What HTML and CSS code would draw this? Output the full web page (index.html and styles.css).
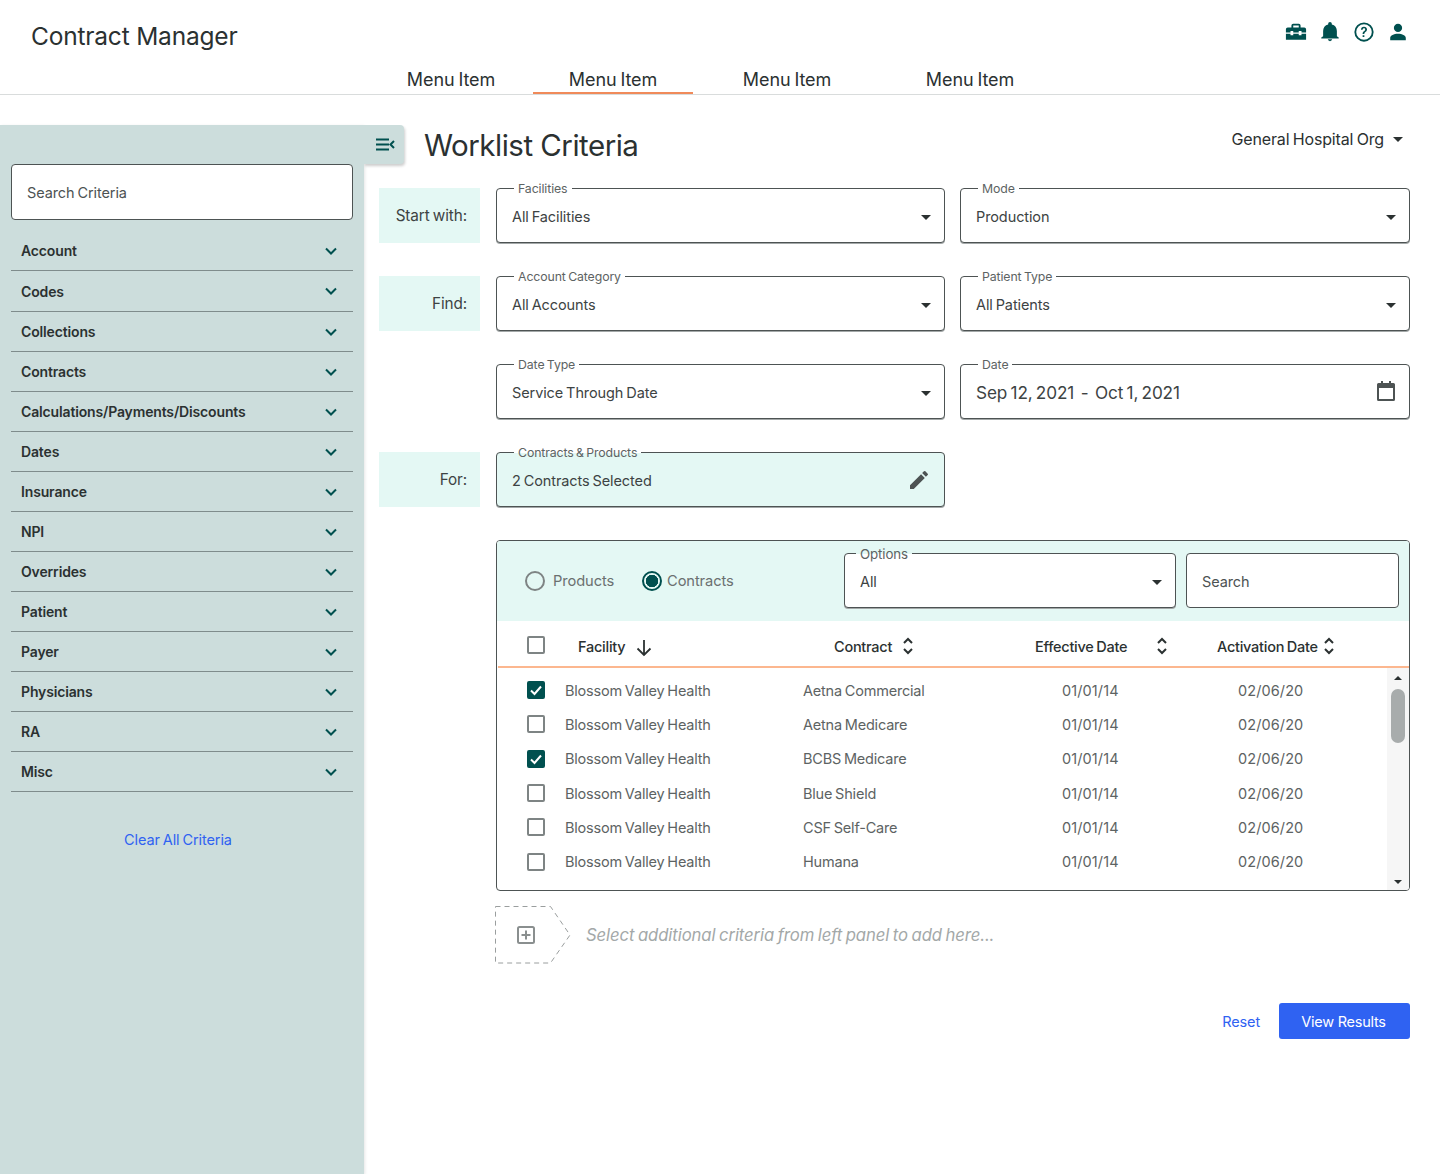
FILE: index.html
```html
<!DOCTYPE html>
<html lang="en">
<head>
<meta charset="utf-8">
<title>Contract Manager</title>
<link rel="stylesheet" href="styles.css">
</head>
<body>
<header class="topbar">
  <div class="topbar-row">
    <div class="brand">Contract Manager</div>
    <div class="top-icons">
      <svg class="ticon" viewBox="0 0 24 24"><path d="M9 3h6a2 2 0 0 1 2 2v2h4a2 2 0 0 1 2 2v3.500h-5V11h-3v1.500H9V11H6v1.500H1V9a2 2 0 0 1 2-2h4V5a2 2 0 0 1 2-2zm0 2v2h6V5H9zM1 14h5v1.500h3V14h6v1.500h3V14h5v6.500H1V14z"/></svg>
      <svg class="ticon" viewBox="0 0 24 24"><path d="M12 22a2.500 2.500 0 0 0 2.400-2h-4.800A2.500 2.500 0 0 0 12 22zm7.500-5.500V11c0-3.500-2-6.300-5.500-7.100V3a2 2 0 0 0-4 0v.9C6.500 4.700 4.500 7.500 4.500 11v5.500L2.500 18v1h19v-1l-2-1.500z"/></svg>
      <svg class="ticon" viewBox="0 0 24 24"><circle cx="12" cy="12" r="9.500" fill="none" stroke="#00504f" stroke-width="2"/><path d="M8.700 9.500A3.300 3.300 0 0 1 12 6.300c1.900 0 3.300 1.300 3.300 3 0 2.500-2.900 2.600-2.900 5h-1.900c0-3.300 2.800-3.200 2.800-5 0-.8-.6-1.300-1.300-1.300s-1.400.6-1.500 1.500H8.700zM10.500 15.500h1.900v2h-1.900z"/></svg>
      <svg class="ticon" viewBox="0 0 24 24"><path d="M12 3a4.500 4.500 0 1 1 0 9 4.500 4.500 0 0 1 0-9zm0 11c4.500 0 8.500 2 8.500 4.500V21h-17v-2.500C3.500 16 7.500 14 12 14z"/></svg>
    </div>
  </div>
  <nav class="menu">
    <a class="menu-item m1">Menu Item</a>
    <a class="menu-item m2 active">Menu Item</a>
    <a class="menu-item m3">Menu Item</a>
    <a class="menu-item m4">Menu Item</a>
  </nav>
</header>

<div class="layout">
  <aside class="sidebar">
    <button class="collapse" aria-label="Collapse">
      <svg width="19" height="13" viewBox="0 0 19 13"><path d="M0 1.500h13M0 6.500h13M0 11.500h13" stroke="#00504f" stroke-width="2" fill="none"/><path d="M18 3 14.500 6.500 18 10" stroke="#00504f" stroke-width="2" fill="none"/></svg>
    </button>
    <div class="side-search">Search Criteria</div>
    <ul class="acc">
      <li>Account<svg class="chev" viewBox="0 0 12 8"><path d="M1 1.500 6 6.500l5-5"/></svg></li>
      <li>Codes<svg class="chev" viewBox="0 0 12 8"><path d="M1 1.500 6 6.500l5-5"/></svg></li>
      <li>Collections<svg class="chev" viewBox="0 0 12 8"><path d="M1 1.500 6 6.500l5-5"/></svg></li>
      <li>Contracts<svg class="chev" viewBox="0 0 12 8"><path d="M1 1.500 6 6.500l5-5"/></svg></li>
      <li>Calculations/Payments/Discounts<svg class="chev" viewBox="0 0 12 8"><path d="M1 1.500 6 6.500l5-5"/></svg></li>
      <li>Dates<svg class="chev" viewBox="0 0 12 8"><path d="M1 1.500 6 6.500l5-5"/></svg></li>
      <li>Insurance<svg class="chev" viewBox="0 0 12 8"><path d="M1 1.500 6 6.500l5-5"/></svg></li>
      <li>NPI<svg class="chev" viewBox="0 0 12 8"><path d="M1 1.500 6 6.500l5-5"/></svg></li>
      <li>Overrides<svg class="chev" viewBox="0 0 12 8"><path d="M1 1.500 6 6.500l5-5"/></svg></li>
      <li>Patient<svg class="chev" viewBox="0 0 12 8"><path d="M1 1.500 6 6.500l5-5"/></svg></li>
      <li>Payer<svg class="chev" viewBox="0 0 12 8"><path d="M1 1.500 6 6.500l5-5"/></svg></li>
      <li>Physicians<svg class="chev" viewBox="0 0 12 8"><path d="M1 1.500 6 6.500l5-5"/></svg></li>
      <li>RA<svg class="chev" viewBox="0 0 12 8"><path d="M1 1.500 6 6.500l5-5"/></svg></li>
      <li>Misc<svg class="chev" viewBox="0 0 12 8"><path d="M1 1.500 6 6.500l5-5"/></svg></li>
    </ul>
    <a class="clear">Clear All Criteria</a>
  </aside>

  <main class="main">
    <div class="title-row">
      <h1>Worklist Criteria</h1>
      <div class="org">General Hospital Org<span class="caret"></span></div>
    </div>

    <div class="form-grid">
      <div class="tag">Start with:</div>
      <div class="field"><span class="legend">Facilities</span><span class="val">All Facilities</span><span class="caret"></span></div>
      <div class="field"><span class="legend">Mode</span><span class="val">Production</span><span class="caret"></span></div>

      <div class="tag">Find:</div>
      <div class="field"><span class="legend">Account Category</span><span class="val">All Accounts</span><span class="caret"></span></div>
      <div class="field"><span class="legend">Patient Type</span><span class="val">All Patients</span><span class="caret"></span></div>

      <div></div>
      <div class="field"><span class="legend">Date Type</span><span class="val">Service Through Date</span><span class="caret"></span></div>
      <div class="field"><span class="legend">Date</span><span class="val date">Sep 12, 2021&nbsp; - &nbsp;Oct 1, 2021</span>
        <svg class="cal" viewBox="0 0 18 20"><path d="M4 0h2v2h6V0h2v2h2.500A1.500 1.500 0 0 1 18 3.500v15a1.500 1.500 0 0 1-1.500 1.500h-15A1.500 1.500 0 0 1 0 18.500v-15A1.500 1.500 0 0 1 1.500 2H4V0zM2 7v11h14V7H2z"/></svg>
      </div>

      <div class="tag">For:</div>
      <div class="field mint"><span class="legend">Contracts &amp; Products</span><span class="val">2 Contracts Selected</span>
        <svg class="pencil" viewBox="0 0 24 24"><path d="M3 17.250V21h3.750L17.810 9.940l-3.750-3.750L3 17.250zM20.710 7.040a1 1 0 0 0 0-1.410l-2.340-2.340a1 1 0 0 0-1.410 0l-1.830 1.830 3.750 3.750 1.830-1.830z"/></svg>
      </div>
      <div></div>
    </div>

    <section class="panel">
      <div class="panel-head">
        <label class="radio">Products</label>
        <label class="radio on">Contracts</label>
        <div class="field options"><span class="legend">Options</span><span class="val">All</span><span class="caret"></span></div>
        <div class="panel-search">Search</div>
      </div>
      <div class="thead">
        <span class="check"></span>
        <span class="th th-fac">Facility<svg class="arrow" viewBox="0 0 16 18"><path d="M8 1v15M1.500 9.500 8 16l6.500-6.500"/></svg></span>
        <span class="th th-con">Contract<svg class="sort" viewBox="0 0 10 18"><path d="M1 6l4-4 4 4M1 12l4 4 4-4"/></svg></span>
        <span class="th th-eff">Effective Date<svg class="sort" viewBox="0 0 10 18"><path d="M1 6l4-4 4 4M1 12l4 4 4-4"/></svg></span>
        <span class="th th-act">Activation Date<svg class="sort" viewBox="0 0 10 18"><path d="M1 6l4-4 4 4M1 12l4 4 4-4"/></svg></span>
      </div>
      <div class="tbody">
        <div class="rows">
          <div class="row"><span class="check on"><svg viewBox="0 0 18 18"><path d="M4 9.500 7.500 13 14 5.500"/></svg></span><span>Blossom Valley Health</span><span>Aetna Commercial</span><span>01/01/14</span><span>02/06/20</span></div>
          <div class="row"><span class="check"></span><span>Blossom Valley Health</span><span>Aetna Medicare</span><span>01/01/14</span><span>02/06/20</span></div>
          <div class="row"><span class="check on"><svg viewBox="0 0 18 18"><path d="M4 9.500 7.500 13 14 5.500"/></svg></span><span>Blossom Valley Health</span><span>BCBS Medicare</span><span>01/01/14</span><span>02/06/20</span></div>
          <div class="row"><span class="check"></span><span>Blossom Valley Health</span><span>Blue Shield</span><span>01/01/14</span><span>02/06/20</span></div>
          <div class="row"><span class="check"></span><span>Blossom Valley Health</span><span>CSF Self-Care</span><span>01/01/14</span><span>02/06/20</span></div>
          <div class="row"><span class="check"></span><span>Blossom Valley Health</span><span>Humana</span><span>01/01/14</span><span>02/06/20</span></div>
        </div>
        <div class="scrollbar">
          <span class="sb-up"></span>
          <span class="sb-thumb"></span>
          <span class="sb-down"></span>
        </div>
      </div>
    </section>

    <div class="add-row">
      <div class="add-shape">
        <svg class="add-outline" width="76" height="58" viewBox="0 0 76 58"><path d="M.5 .5h55L75 29 55.500 57H.5z" fill="none" stroke="#9a9e9e" stroke-width="1" stroke-dasharray="5 4"/></svg>
        <svg class="add-plus" width="18" height="18" viewBox="0 0 18 18"><rect x="1" y="1" width="16" height="16" rx="1.500" fill="none" stroke="#8a8f8f" stroke-width="2"/><path d="M9 4.500v9M4.500 9h9" stroke="#8a8f8f" stroke-width="2"/></svg>
      </div>
      <span class="add-text">Select additional criteria from left panel to add here...</span>
    </div>

    <div class="actions">
      <a class="reset">Reset</a>
      <button class="primary">View Results</button>
    </div>
  </main>
</div>
</body>
</html>
```

FILE: styles.css
```css
*, *::before, *::after { box-sizing: border-box; }
html, body { margin: 0; padding: 0; }
body {
  width: 1440px;
  height: 1174px;
  overflow: hidden;
  background: #fff;
  font-family: "Inter", "Liberation Sans", sans-serif;
  color: #3d4343;
  font-size: 14px;
  letter-spacing: -0.1px;
  word-spacing: -1px;
}

/* header */
.topbar { height: 95px; border-bottom: 1px solid #d9dcdc; position: relative; }
.topbar-row { display: flex; justify-content: space-between; padding: 20px 31px 0 31px; }
.brand { font-size: 24.500px; line-height: 32px; color: #2b3131; letter-spacing: -0.2px; word-spacing: 0; }
.top-icons { display: flex; gap: 12px; padding-top: 1px; }
.ticon { width: 22px; height: 22px; fill: #00504f; }
.menu { display: flex; position: absolute; left: 0; top: 64px; height: 30px; }
.menu-item { font-size: 18px; line-height: 32px; color: #2b3131; text-align: center; word-spacing: -1px; }
.m1 { margin-left: 369px; width: 164px; }
.m2 { width: 160px; }
.m3 { width: 188px; }
.m4 { margin-left: 4px; width: 170px; }
.active { border-bottom: 2px solid #f08a5a; height: 30px; }

.layout { display: flex; height: 1079px; padding-top: 30px; }

/* sidebar */
.sidebar {
  width: 364px;
  flex: none;
  background: #ccdddc;
  padding: 39px 11px 0;
  position: relative;
  box-shadow: 1px 1px 3px rgba(0,0,0,.1);
}
.collapse {
  position: absolute; left: 364px; top: 0;
  width: 40px; height: 39px;
  background: #ccdddc; border: 0; border-radius: 0 4px 4px 0;
  box-shadow: 1px 2px 3px rgba(0,0,0,.2);
  clip-path: inset(0 -6px -6px 0);
  padding: 0 0 0 12px;
  display: flex; align-items: center;
}
.collapse svg { display: block; }
.side-search {
  height: 56px; background: #fff; border: 1px solid #4d5353; border-radius: 4px;
  padding-left: 15px; line-height: 56px; color: #4d5353; font-size: 14.500px;
}
.acc { list-style: none; margin: 11px 0 0; padding: 0; }
.acc li {
  height: 40px; border-bottom: 1px solid #7f8c8c;
  display: flex; align-items: center; justify-content: space-between;
  padding: 0 16px 0 10px;
  font-weight: 600; font-size: 14px; color: #2b3131; letter-spacing: -0.15px;
}
.acc li:nth-child(2) { height: 41px; }
.chev { width: 12px; height: 8px; fill: none; stroke: #00504f; stroke-width: 2; }
.clear { display: block; margin-top: 39px; margin-left: 113px; color: #2f62f2; font-size: 14.500px; line-height: 18px; }

/* main */
.main { flex: 1; padding: 0 30px 0 15px; position: relative; }
.title-row { display: flex; justify-content: space-between; padding-left: 45px; height: 63px; }
h1 { margin: 0; font-size: 29.500px; font-weight: 400; line-height: 40px; color: #2b3131; letter-spacing: -0.5px; word-spacing: 0; }
.org { display: flex; align-items: center; height: 28px; font-size: 16px; color: #2b3131; padding-right: 7px; letter-spacing: -0.15px; }
.org .caret { margin-left: 9px; position: static; display: block; }

.caret { width: 0; height: 0; border-left: 5px solid transparent; border-right: 5px solid transparent; border-top: 5px solid #2b3131; position: absolute; right: 13px; top: 26px; }

.form-grid { display: grid; grid-template-columns: 117px 464px 450px; row-gap: 33px; grid-auto-rows: 55px; }
.tag { width: 101px; background: #e4f8f4; display: flex; align-items: center; justify-content: flex-end; padding: 0 13px 0 0; font-size: 15.300px; color: #3d4343; }
.field {
  position: relative; border: 1px solid #4d5353; border-radius: 4px; background: #fff;
  display: flex; align-items: center; padding: 1px 15px 0;
  box-shadow: 0 1px 0 #a3a8a8;
  font-size: 14.500px;
}
.form-grid > .field:nth-child(3n+2) { width: 449px; }
.mint { background: #e4f8f4; }
.legend {
  position: absolute; left: 17px; top: -7px; background: #fff;
  padding: 0 4px; font-size: 12.300px; line-height: 14px; color: #5d6363;
}
.mint .legend { background: linear-gradient(#fff 50%, #e4f8f4 50%); }
.val { color: #3d4343; }
.date { font-size: 17.200px; word-spacing: -1.500px; }
.cal { position: absolute; right: 14px; top: 16px; width: 18px; height: 20px; fill: #4d5353; }
.pencil { position: absolute; right: 13px; top: 15px; width: 24px; height: 24px; fill: #4d5353; }

/* panel */
.panel {
  margin: 33px 0 0 117px; width: 914px; height: 351px;
  border: 1px solid #4d5353; border-radius: 4px; overflow: hidden;
  position: relative;
}
.panel-head {
  height: 80px; background: #e4f8f4;
  display: flex; align-items: center; padding: 0 10px 0 28px;
}
.radio { display: flex; align-items: center; gap: 8px; color: #6b7070; font-size: 14.700px; }
.radio::before { content: ""; width: 20px; height: 20px; border: 2px solid #7e8484; border-radius: 50%; background: transparent; flex: none; }
.radio:first-child { width: 117px; }
.radio.on { width: 202px; gap: 5px; }
.radio.on::before { border-color: #00504f; background: radial-gradient(circle, #00504f 0 6px, transparent 6.500px); }
.options { width: 332px; height: 55px; margin: -1px 10px 0 0; flex: none; }
.options .legend { left: 11px; background: linear-gradient(#e4f8f4 50%, #fff 50%); font-size: 13.300px; }
.panel-search {
  width: 213px; height: 55px; margin-top: -1px; background: #fff; border: 1px solid #4d5353; border-radius: 4px;
  padding-left: 15px; line-height: 55px; font-size: 14.500px; color: #4d5353; flex: none;
}
.thead { height: 47px; border-bottom: 2px solid #fcb78f; position: relative; display: flex; align-items: center; padding: 3px 0 0 29px; margin-left: 1px; }
.th { display: flex; align-items: center; font-weight: 500; color: #2b3131; font-size: 14.500px; letter-spacing: -0.25px; position: absolute; top: 15px; height: 20px; }
.th-fac { left: 80px; }
.th-con { left: 336px; }
.th-eff { left: 537px; }
.th-act { left: 719px; }
.arrow { width: 16px; height: 18px; margin-left: 11px; margin-top: 3px; fill: none; stroke: #2b3131; stroke-width: 1.800; }
.sort { width: 10px; height: 18px; margin-left: 11px; fill: none; stroke: #2b3131; stroke-width: 2; }
.th-eff .sort { margin-left: 30px; }
.th-act .sort { margin-left: 6px; }
.check { width: 18px; height: 18px; border: 2px solid #7e8484; border-radius: 2px; display: block; flex: none; background: #fff; }
.check.on { background: #00504f; border-color: #00504f; }
.check svg { display: block; width: 18px; height: 18px; margin: -2px; fill: none; stroke: #fff; stroke-width: 2; }
.tbody { display: flex; height: 222px; }
.rows { flex: 1; padding-top: 5px; }
.row {
  display: grid; grid-template-columns: 38px 238px 259px 176px 1fr;
  height: 34.300px; align-items: center; padding-left: 30px; color: #5d6363; font-size: 14.500px; letter-spacing: -0.2px;
}
.row > span:nth-child(n+4) { letter-spacing: 0.1px; }
.scrollbar { width: 22px; background: #f6f6f6; position: relative; flex: none; }
.sb-thumb { position: absolute; left: 4px; top: 21px; width: 14px; height: 54px; border-radius: 7px; background: #a8acac; }
.sb-up, .sb-down { position: absolute; left: 7px; width: 0; height: 0; border-left: 4px solid transparent; border-right: 4px solid transparent; }
.sb-up { top: 8px; border-bottom: 4px solid #2b3131; }
.sb-down { bottom: 6px; border-top: 4px solid #2b3131; }

/* add */
.add-row { display: flex; align-items: center; margin: 15px 0 0 116px; height: 58px; }
.add-shape { position: relative; width: 76px; height: 58px; flex: none; }
.add-outline { display: block; }
.add-plus { position: absolute; left: 22px; top: 20px; }
.add-text { margin-left: 15px; font-style: italic; color: #a3a8a8; font-size: 16.700px; }

.actions { display: flex; justify-content: flex-end; align-items: center; margin-top: 39px; gap: 19px; }
.reset { color: #2f62f2; font-size: 14.500px; letter-spacing: -0.15px; }
.primary { width: 131px; height: 36px; padding: 0 2px 0 0; background: #2f62f2; border: 0; border-radius: 3px; color: #fff; font: inherit; font-size: 14.500px; letter-spacing: -0.25px; }
```
